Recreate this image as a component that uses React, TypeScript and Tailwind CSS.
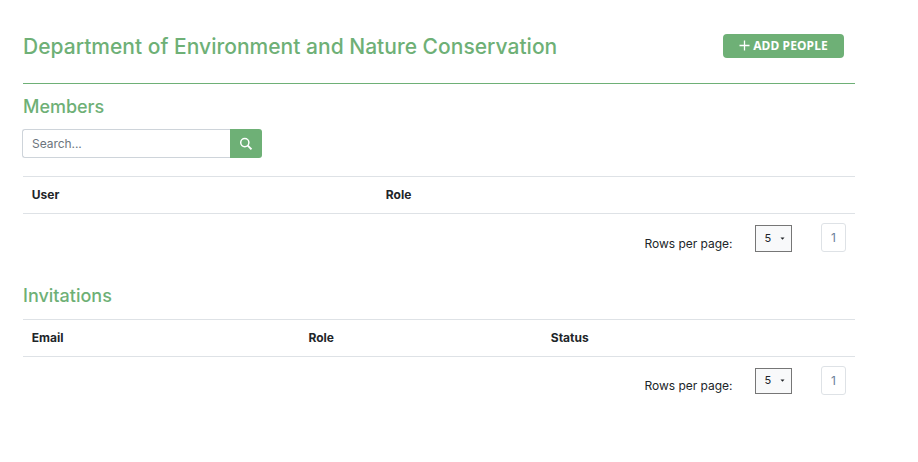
import React from "react";

function SearchIcon() {
  return (
    <svg width="14" height="14" viewBox="0 0 14 14" fill="none" stroke="white">
      <circle cx="5.8" cy="5.6" r="4.1" strokeWidth="1.5" />
      <path d="M8.8 8.7L12.5 12.4" strokeWidth="1.9" />
    </svg>
  );
}

function Pagination({ selectClass, labelClass }: { selectClass: string; labelClass: string }) {
  return (
    <div className="flex h-[38px] items-start pt-[9px] text-[12px]">
      <span className={`ml-[621.5px] w-[110.5px] leading-[18px] tracking-[-0.03px] ${labelClass}`}>Rows per page:</span>
      <button
        className={`flex w-[37px] items-center border border-[#767676] bg-[#f8f9fa] pl-[8.5px] text-[11px] text-[#212529] ${selectClass}`}
      >
        <span className="w-[15px] text-left">5</span>
        <svg width="5" height="3" viewBox="0 0 5 3">
          <path d="M0.5 0.5h4L2.5 2.7z" fill="#212529" />
        </svg>
      </button>
      <button className="ml-[29px] h-[29px] w-[25px] rounded-[3px] border border-[#dee2e6] text-[12px] leading-[27px] text-[#6c8198]">
        1
      </button>
    </div>
  );
}

function HeaderRow({ columns }: { columns: { label: string; width: string }[] }) {
  return (
    <div className="flex h-[38px] items-center border-y border-[#dee2e6] text-[12px] font-bold leading-[18px]">
      {columns.map((c) => (
        <div key={c.label} className={`pl-[8.8px] ${c.width}`}>
          {c.label}
        </div>
      ))}
    </div>
  );
}

export default function App() {
  return (
    <main className="h-[462px] w-[918px] bg-white pl-[23px] font-['Inter',sans-serif] text-[#212529]">
      <div className="w-[832px]">
        <header className="flex h-[84px] items-start justify-between border-b border-[#6eb076] pr-[11px] pt-[34px]">
          <h1 className="text-[21px] font-medium leading-[25px] tracking-[0.018px] text-[#6eb076]">
            Department of Environment and Nature Conservation
          </h1>
          <button className="flex h-[24px] w-[121px] items-center justify-center gap-[3px] rounded-[4px] bg-[#6eb076] font-['Noto_Sans',sans-serif] text-[12px] font-bold tracking-[0.1px] text-white">
            <svg width="11" height="11" viewBox="0 0 11 11" className="-mt-px">
              <path d="M5.5 0.5v10M0.5 5.5h10" stroke="white" strokeWidth="1.3" />
            </svg>
            ADD PEOPLE
          </button>
        </header>

        <section className="h-[192px] pt-[12px]">
          <h2 className="text-[18px] font-medium leading-[22px] tracking-[-0.03px] text-[#6eb076]">Members</h2>
          <div className="-ml-px mt-[11px] flex h-[29px] w-[240px]">
            <input
              className="w-[208px] rounded-l-[3px] border border-r-0 border-[#ced4da] px-[9px] text-[12px] tracking-[-0.05px] outline-none placeholder:text-[#6c757d]"
              placeholder="Search..."
            />
            <button className="flex w-[32px] items-center justify-center rounded-r-[3px] bg-[#6eb076]">
              <SearchIcon />
            </button>
          </div>
          <div className="mt-[18px]">
            <HeaderRow
              columns={[
                { label: "User", width: "w-[354px]" },
                { label: "Role", width: "w-[478px]" },
              ]}
            />
            <Pagination selectClass="mt-[2px] h-[27px]" labelClass="mt-[12px]" />
          </div>
        </section>

        <section className="pt-[9px]">
          <h2 className="text-[18px] font-medium leading-[22px] text-[#6eb076]">Invitations</h2>
          <div className="mt-[12px]">
            <HeaderRow
              columns={[
                { label: "Email", width: "w-[276.7px]" },
                { label: "Role", width: "w-[242.3px]" },
                { label: "Status", width: "w-[313px]" },
              ]}
            />
            <Pagination selectClass="mt-[2px] h-[26px] pb-px" labelClass="mt-[11px]" />
          </div>
        </section>
      </div>
    </main>
  );
}
